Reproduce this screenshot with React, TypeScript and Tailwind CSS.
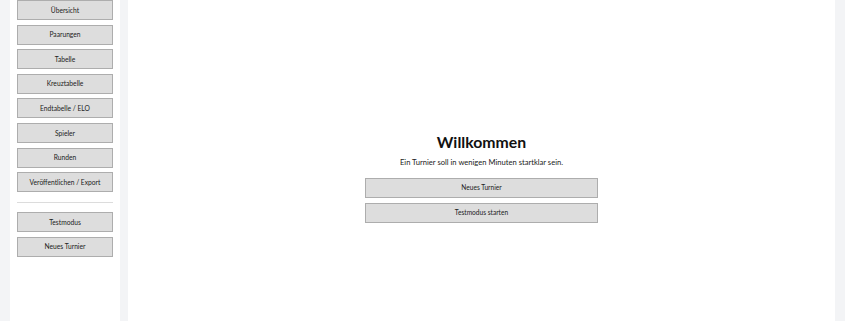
const navItems = [
  "Übersicht",
  "Paarungen",
  "Tabelle",
  "Kreuztabelle",
  "Endtabelle / ELO",
  "Spieler",
  "Runden",
  "Veröffentlichen / Export",
];

function SideButton({ label }: { label: string }) {
  return (
    <button className="h-[20px] w-full border border-[#adadad] bg-[#dddddd] text-[6.7px] leading-none text-[#222]">
      {label}
    </button>
  );
}

export default function App() {
  return (
    <div
      className="flex h-[321px] w-[845px] overflow-hidden bg-[#f3f4f6]"
      style={{ fontFamily: 'Lato, "Noto Sans", sans-serif' }}
    >
      {/* Sidebar */}
      <aside className="ml-[10px] flex w-[110px] flex-col bg-white px-[7px]">
        <div className="flex flex-col gap-[4.6px]">
          {navItems.map((item) => (
            <SideButton key={item} label={item} />
          ))}
        </div>
        <div className="my-[9.5px] h-px bg-[#dcdcdc]" />
        <div className="flex flex-col gap-[4.6px]">
          <SideButton label="Testmodus" />
          <SideButton label="Neues Turnier" />
        </div>
      </aside>

      {/* Main */}
      <main className="ml-[8px] flex w-[707px] flex-col items-center justify-center bg-white pt-[34px]">
        <h1 className="text-[15.8px] font-bold leading-tight text-[#111]">Willkommen</h1>
        <p className="mt-[5px] text-[7.6px] text-[#222]">Ein Turnier soll in wenigen Minuten startklar sein.</p>
        <div className="mt-[10px] flex w-[233px] flex-col gap-[5px]">
          <button className="h-[20px] w-full border border-[#adadad] bg-[#dddddd] text-[6.6px] text-[#222]">
            Neues Turnier
          </button>
          <button className="h-[20px] w-full border border-[#adadad] bg-[#dddddd] text-[6.6px] text-[#222]">
            Testmodus starten
          </button>
        </div>
      </main>
    </div>
  );
}
